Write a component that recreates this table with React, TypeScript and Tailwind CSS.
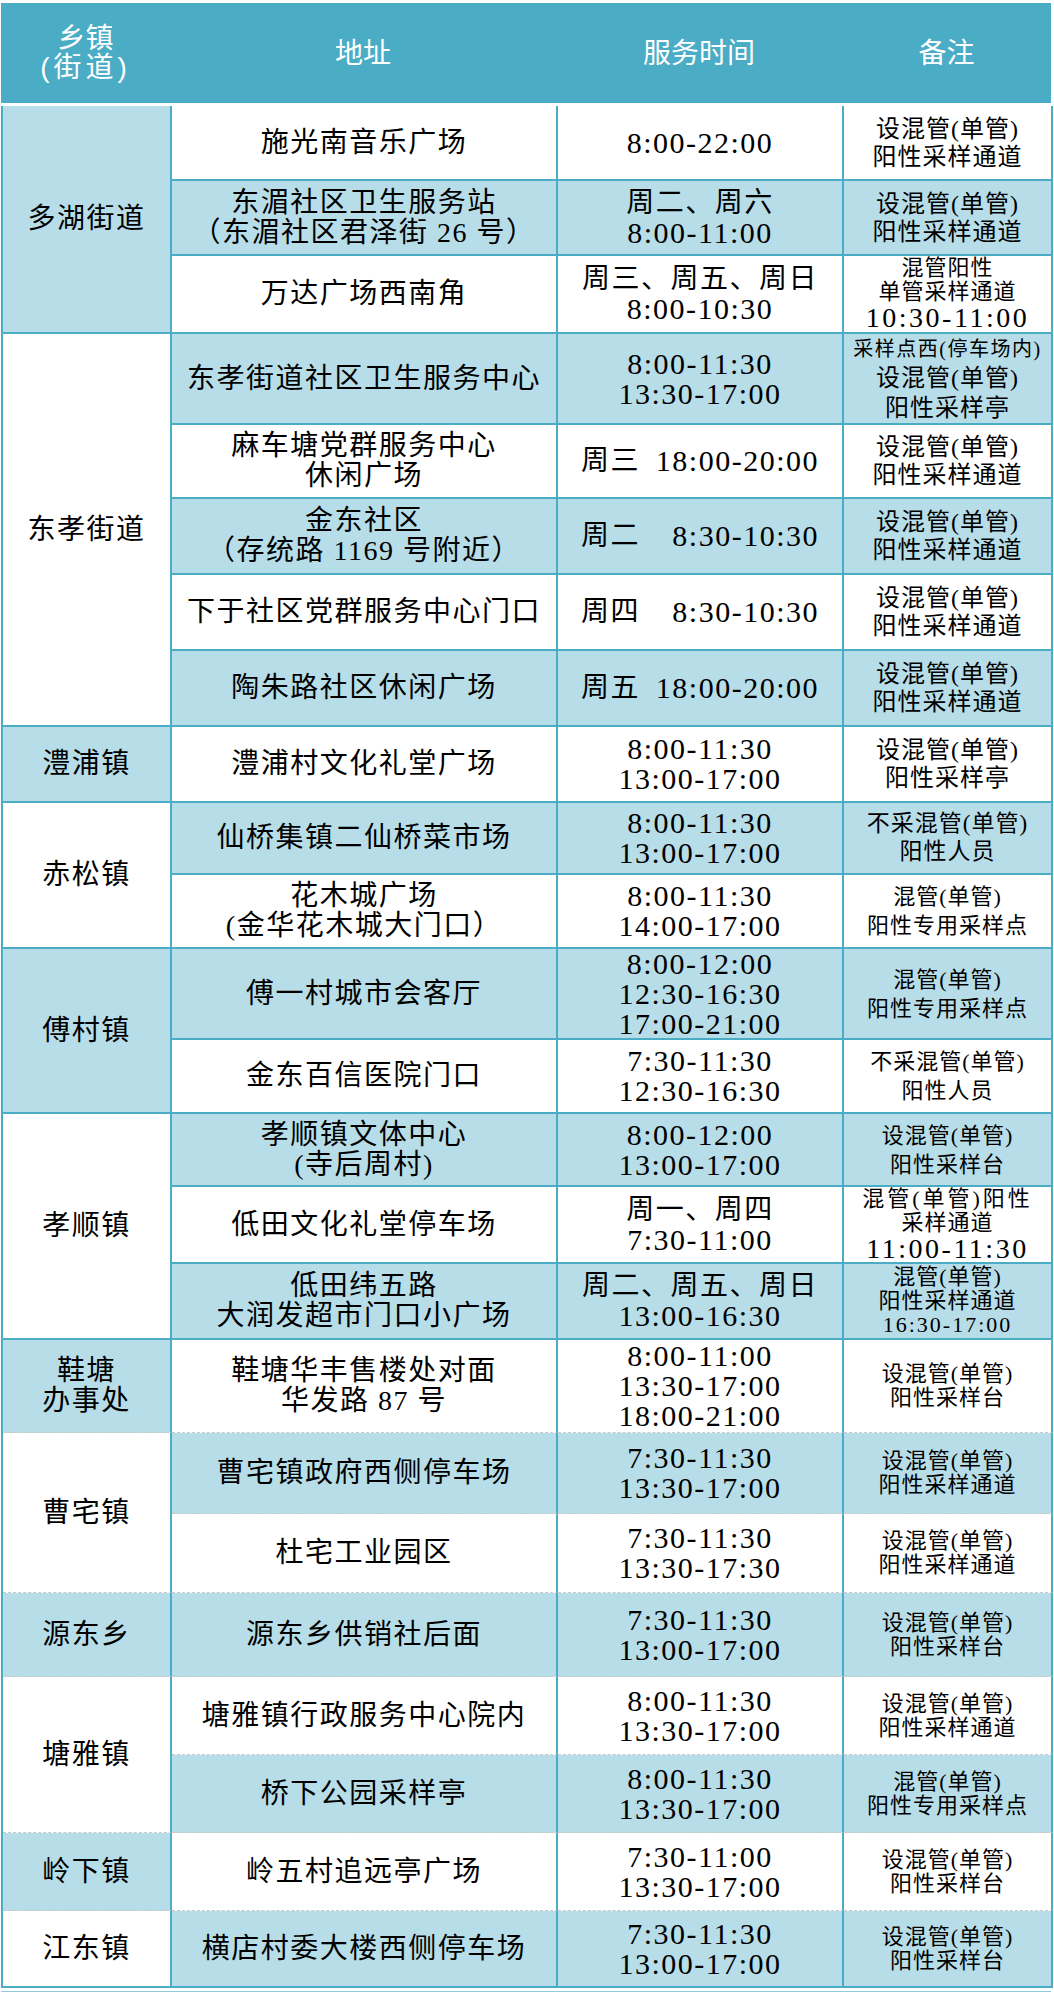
const cjk = 'text-[28px] leading-[30px] tracking-[1.5px]';
const num = 'text-[30px] leading-[30px] tracking-[1.5px]';

const rBig = 'text-[24px] leading-[28px] tracking-[1px]';
const rMed = 'text-[23px] leading-[28px] tracking-[1px]';
const rMid = 'text-[22px] leading-[29px] tracking-[1px]';
const rLow = 'text-[22px] leading-[24px] tracking-[1px]';
const rNum = 'text-[28px] leading-[28px] tracking-[2.5px]';
const rNumS = 'text-[22px] leading-[24px] tracking-[2px]';

type Line = { t: string; c: string };
type TimeLine = string | { day: string; time: string };

interface Row {
  addr: string[];
  time: TimeLine[];
  remark: Line[];
}

const std = (a: string, b: string, c: string): Line[] => [
  { t: a, c },
  { t: b, c },
];

const rows: Row[] = [
  { addr: ['施光南音乐广场'], time: ['8:00-22:00'], remark: std('设混管(单管)', '阳性采样通道', rBig) },
  { addr: ['东湄社区卫生服务站', '（东湄社区君泽街 26 号）'], time: ['周二、周六', '8:00-11:00'], remark: std('设混管(单管)', '阳性采样通道', rBig) },
  {
    addr: ['万达广场西南角'],
    time: ['周三、周五、周日', '8:00-10:30'],
    remark: [
      { t: '混管阳性', c: rLow },
      { t: '单管采样通道', c: rLow },
      { t: '10:30-11:00', c: rNum },
    ],
  },
  {
    addr: ['东孝街道社区卫生服务中心'],
    time: ['8:00-11:30', '13:30-17:00'],
    remark: [
      { t: '采样点西(停车场内)', c: 'text-[20px] leading-[28px] tracking-[1.5px]' },
      { t: '设混管(单管)', c: 'text-[24px] leading-[30px] tracking-[1px]' },
      { t: '阳性采样亭', c: 'text-[24px] leading-[30px] tracking-[1px]' },
    ],
  },
  { addr: ['麻车塘党群服务中心', '休闲广场'], time: [{ day: '周三', time: '18:00-20:00' }], remark: std('设混管(单管)', '阳性采样通道', rBig) },
  { addr: ['金东社区', '（存统路 1169 号附近）'], time: [{ day: '周二', time: '8:30-10:30' }], remark: std('设混管(单管)', '阳性采样通道', rBig) },
  { addr: ['下于社区党群服务中心门口'], time: [{ day: '周四', time: '8:30-10:30' }], remark: std('设混管(单管)', '阳性采样通道', rBig) },
  { addr: ['陶朱路社区休闲广场'], time: [{ day: '周五', time: '18:00-20:00' }], remark: std('设混管(单管)', '阳性采样通道', rBig) },
  { addr: ['澧浦村文化礼堂广场'], time: ['8:00-11:30', '13:00-17:00'], remark: std('设混管(单管)', '阳性采样亭', rBig) },
  { addr: ['仙桥集镇二仙桥菜市场'], time: ['8:00-11:30', '13:00-17:00'], remark: std('不采混管(单管)', '阳性人员', rMed) },
  { addr: ['花木城广场', '(金华花木城大门口）'], time: ['8:00-11:30', '14:00-17:00'], remark: std('混管(单管)', '阳性专用采样点', rMid) },
  { addr: ['傅一村城市会客厅'], time: ['8:00-12:00', '12:30-16:30', '17:00-21:00'], remark: std('混管(单管)', '阳性专用采样点', rMid) },
  { addr: ['金东百信医院门口'], time: ['7:30-11:30', '12:30-16:30'], remark: std('不采混管(单管)', '阳性人员', rMid) },
  { addr: ['孝顺镇文体中心', '(寺后周村)'], time: ['8:00-12:00', '13:00-17:00'], remark: std('设混管(单管)', '阳性采样台', rMid) },
  {
    addr: ['低田文化礼堂停车场'],
    time: ['周一、周四', '7:30-11:00'],
    remark: [
      { t: '混管(单管)阳性', c: 'text-[22px] leading-[24px] tracking-[3px]' },
      { t: '采样通道', c: rLow },
      { t: '11:00-11:30', c: rNum },
    ],
  },
  {
    addr: ['低田纬五路', '大润发超市门口小广场'],
    time: ['周二、周五、周日', '13:00-16:30'],
    remark: [
      { t: '混管(单管)', c: rLow },
      { t: '阳性采样通道', c: rLow },
      { t: '16:30-17:00', c: rNumS },
    ],
  },
  { addr: ['鞋塘华丰售楼处对面', '华发路 87 号'], time: ['8:00-11:00', '13:30-17:00', '18:00-21:00'], remark: std('设混管(单管)', '阳性采样台', rLow) },
  { addr: ['曹宅镇政府西侧停车场'], time: ['7:30-11:30', '13:30-17:00'], remark: std('设混管(单管)', '阳性采样通道', rLow) },
  { addr: ['杜宅工业园区'], time: ['7:30-11:30', '13:30-17:30'], remark: std('设混管(单管)', '阳性采样通道', rLow) },
  { addr: ['源东乡供销社后面'], time: ['7:30-11:30', '13:00-17:00'], remark: std('设混管(单管)', '阳性采样台', rLow) },
  { addr: ['塘雅镇行政服务中心院内'], time: ['8:00-11:30', '13:30-17:00'], remark: std('设混管(单管)', '阳性采样通道', rLow) },
  { addr: ['桥下公园采样亭'], time: ['8:00-11:30', '13:30-17:00'], remark: std('混管(单管)', '阳性专用采样点', rLow) },
  { addr: ['岭五村追远亭广场'], time: ['7:30-11:00', '13:30-17:00'], remark: std('设混管(单管)', '阳性采样台', rLow) },
  { addr: ['横店村委大楼西侧停车场'], time: ['7:30-11:30', '13:00-17:00'], remark: std('设混管(单管)', '阳性采样台', rLow) },
];

const groups = [
  { name: ['多湖街道'], from: 0, span: 3 },
  { name: ['东孝街道'], from: 3, span: 5 },
  { name: ['澧浦镇'], from: 8, span: 1 },
  { name: ['赤松镇'], from: 9, span: 2 },
  { name: ['傅村镇'], from: 11, span: 2 },
  { name: ['孝顺镇'], from: 13, span: 3 },
  { name: ['鞋塘', '办事处'], from: 16, span: 1 },
  { name: ['曹宅镇'], from: 17, span: 2 },
  { name: ['源东乡'], from: 19, span: 1 },
  { name: ['塘雅镇'], from: 20, span: 2 },
  { name: ['岭下镇'], from: 22, span: 1 },
  { name: ['江东镇'], from: 23, span: 1 },
];

const spanCls: Record<number, string> = {
  1: 'row-span-1',
  2: 'row-span-2',
  3: 'row-span-3',
  5: 'row-span-5',
};

function bottomLine(i: number) {
  if (i <= 15 || i === 23) return 'border-b-2 border-b-[#4BACC6]';
  return 'border-b border-b-[#c9c9c9] [border-bottom-style:dashed]';
}

function Cell({ row, light, className = '', children }: { row: number; light: boolean; className?: string; children: React.ReactNode }) {
  return (
    <div
      className={`${light ? 'bg-[#B7DDE8]' : 'bg-white'} ${bottomLine(row)} border-r-2 border-r-[#4BACC6] flex flex-col items-center justify-center text-center text-black ${className}`}
    >
      {children}
    </div>
  );
}

function TimeCell({ lines }: { lines: TimeLine[] }) {
  return (
    <>
      {lines.map((l, i) =>
        typeof l === 'string' ? (
          <div key={i} className={/^[\d:\-]+$/.test(l) ? num : cjk}>
            {l}
          </div>
        ) : (
          <div key={i} className="flex w-[238px] items-center justify-between">
            <span className={cjk}>{l.day}</span>
            <span className={num}>{l.time}</span>
          </div>
        )
      )}
    </>
  );
}

export default function App() {
  const cells: React.ReactNode[] = [];
  groups.forEach((g, gi) => {
    const last = g.from + g.span - 1;
    cells.push(
      <Cell key={`g${gi}`} row={last} light={gi % 2 === 0} className={spanCls[g.span]}>
        {g.name.map((n) => (
          <div key={n} className={cjk}>
            {n}
          </div>
        ))}
      </Cell>
    );
    for (let i = g.from; i <= last; i++) {
      const r = rows[i];
      const light = i % 2 === 1;
      cells.push(
        <Cell key={`a${i}`} row={i} light={light}>
          {r.addr.map((a) => (
            <div key={a} className={`${cjk} whitespace-pre`}>
              {a}
            </div>
          ))}
        </Cell>,
        <Cell key={`t${i}`} row={i} light={light}>
          <TimeCell lines={r.time} />
        </Cell>,
        <Cell key={`r${i}`} row={i} light={light}>
          {r.remark.map((l, k) => (
            <div key={k} className={`${l.c} whitespace-pre`}>
              {l.t}
            </div>
          ))}
        </Cell>
      );
    }
  });

  return (
    <div className="w-[1054px] h-[1993px] bg-white pt-[3px] pl-[1px] font-['Liberation_Serif','Noto_Sans_CJK_SC',serif]">
      <div className="grid h-[100px] w-[1050px] grid-cols-[169px_386px_286px_209px] bg-[#4BACC6] text-white font-['Liberation_Sans','Noto_Sans_CJK_SC',sans-serif] text-[28px] leading-[29px]">
        <div className="flex flex-col items-center justify-center">
          <div>乡镇</div>
          <div className="tracking-[4px]">(街道)</div>
        </div>
        <div className="flex items-center justify-center">地址</div>
        <div className="flex items-center justify-center">服务时间</div>
        <div className="flex items-center justify-center">备注</div>
      </div>
      <div className="mt-[3px] grid w-[1050px] grid-cols-[169px_386px_286px_209px] grid-rows-[75px_75px_78px_91px_74px_76px_76px_76px_76px_72px_74px_91px_74px_73px_77px_76px_93px_81px_79px_84px_78px_78px_78px_77px] border-l-2 border-l-[#4BACC6]">
        {cells}
      </div>
      <div className="mt-[3px] h-[1px] w-[1050px] bg-[#8fcbdc]" />
    </div>
  );
}
